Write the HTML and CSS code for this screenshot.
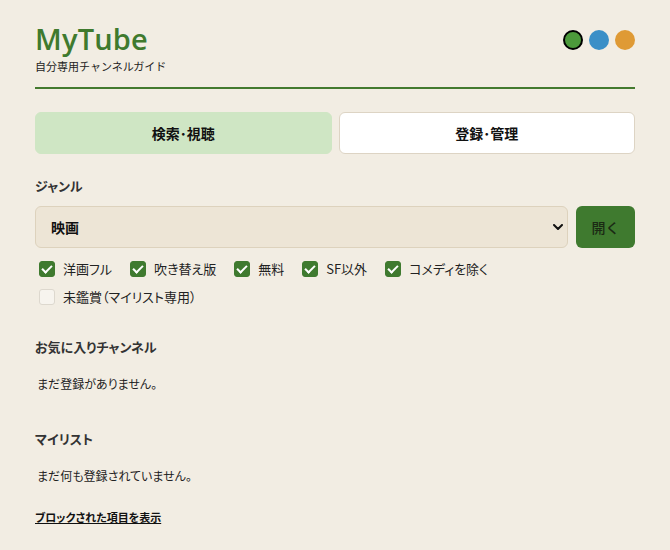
FILE: index.html
```html
<!DOCTYPE html>
<html lang="ja">
<head>
<meta charset="utf-8">
<title>MyTube</title>
<link rel="stylesheet" href="styles.css">
</head>
<body>
<div class="app">
  <header class="header">
    <div class="brand">
      <h1 class="title">MyTube</h1>
      <div class="subtitle">自分専用チャンネルガイド</div>
    </div>
    <div class="themes">
      <span class="dot dot-green is-active"></span>
      <span class="dot dot-blue"></span>
      <span class="dot dot-orange"></span>
    </div>
  </header>

  <nav class="tabs">
    <button class="tab is-active">検索･視聴</button>
    <button class="tab">登録･管理</button>
  </nav>

  <section class="genre">
    <div class="label">ジャンル</div>
    <div class="genre-row">
      <div class="select-wrap">
        <select class="select"><option>映画</option></select>
        <svg class="chev" viewBox="0 0 10 6" width="10" height="6"><path d="M1 1 L5 5 L9 1" fill="none" stroke="#111" stroke-width="2" stroke-linecap="round" stroke-linejoin="round"/></svg>
      </div>
      <button class="open-btn">開く</button>
    </div>
    <div class="checks">
      <label class="check"><input type="checkbox" checked><span>洋画フル</span></label>
      <label class="check"><input type="checkbox" checked><span>吹き替え版</span></label>
      <label class="check"><input type="checkbox" checked><span>無料</span></label>
      <label class="check"><input type="checkbox" checked><span>SF以外</span></label>
      <label class="check"><input type="checkbox" checked><span>コメディを除く</span></label>
    </div>
    <div class="checks">
      <label class="check"><input type="checkbox" disabled><span>未鑑賞（マイリスト専用）</span></label>
    </div>
  </section>

  <section class="block block-first">
    <h2 class="heading">お気に入りチャンネル</h2>
    <p class="empty">まだ登録がありません。</p>
  </section>

  <section class="block">
    <h2 class="heading">マイリスト</h2>
    <p class="empty">まだ何も登録されていません。</p>
  </section>

  <a class="blocked-link" href="#">ブロックされた項目を表示</a>
</div>
</body>
</html>
```

FILE: styles.css
```css
* { box-sizing: border-box; }
html, body { margin: 0; padding: 0; }
body {
  background: #f2ede3;
  color: #222;
  font-family: "Noto Sans CJK JP", "Noto Sans", sans-serif;
  font-feature-settings: "palt";
}
.app {
  width: 600px;
  margin-left: 35px;
  padding-top: 20px;
}
.header {
  display: flex;
  justify-content: space-between;
  align-items: flex-start;
  border-bottom: 2px solid #447a2f;
  padding-bottom: 13px;
}
.title {
  margin: 0;
  font-family: "Open Sans", "Noto Sans", sans-serif;
  font-size: 29px;
  font-weight: 600;
  color: #3f7a2e;
  line-height: 38px;
  letter-spacing: 0.2px;
}
.subtitle {
  font-size: 11px;
  line-height: 16px;
  color: #222;
  font-feature-settings: normal;
}
.themes {
  display: flex;
  gap: 6px;
  margin-top: 10px;
}
.dot {
  width: 20px;
  height: 20px;
  border-radius: 50%;
  display: block;
}
.dot-green { background: #4c9a3b; }
.dot-blue { background: #3a8fc7; }
.dot-orange { background: #df9a35; }
.dot.is-active { border: 2px solid #000; }

.tabs {
  display: grid;
  grid-template-columns: 1fr 1fr;
  gap: 7px;
  margin-top: 23px;
}
.tab {
  height: 42px;
  border-radius: 6px;
  border: 1px solid #ddd4c4;
  background: #fff;
  font-family: inherit;
  font-size: 14px;
  font-weight: 700;
  color: #111;
}
.tab.is-active {
  background: #cfe6c4;
  border-color: #cfe6c4;
}

.genre { margin-top: 23px; }
.label {
  font-size: 13px;
  font-weight: 700;
  line-height: 18px;
  color: #333;
}
.genre-row {
  display: flex;
  gap: 8px;
  margin-top: 11px;
}
.select-wrap {
  position: relative;
  flex: 1;
}
.select {
  width: 100%;
  height: 42px;
  appearance: none;
  -webkit-appearance: none;
  background: #ede5d6;
  border: 1px solid #ddd2bd;
  border-radius: 6px;
  padding: 0 15px;
  font-family: inherit;
  font-feature-settings: "palt";
  font-size: 14px;
  font-weight: 700;
  color: #111;
}
.chev {
  position: absolute;
  right: 5px;
  top: 18px;
  pointer-events: none;
}
.open-btn {
  width: 59px;
  height: 42px;
  border: none;
  border-radius: 6px;
  background: #3f7a2f;
  color: #1b2a14;
  font-family: inherit;
  font-size: 14px;
  font-weight: 500;
}

.checks {
  display: flex;
  flex-wrap: wrap;
  column-gap: 14px;
  margin-top: 9px;
}
.checks + .checks { margin-top: 4px; }
.check {
  display: flex;
  align-items: center;
  gap: 8px;
  font-size: 13px;
  line-height: 24px;
  color: #222;
}
.check input {
  appearance: none;
  -webkit-appearance: none;
  width: 16px;
  height: 16px;
  margin: 0 0 0 4px;
  border-radius: 3px;
  background: #f7f4ee;
  border: 1px solid #ddd8ce;
  display: grid;
  place-items: center;
}
.check input:checked {
  background: #3f7a2f;
  border-color: #3f7a2f;
}
.check input:checked::after {
  content: "";
  width: 4px;
  height: 8px;
  border: solid #fff;
  border-width: 0 2px 2px 0;
  transform: translateY(-1px) rotate(45deg);
}

.block { margin-top: 37px; }
.block.block-first { margin-top: 29px; }
.heading {
  margin: 0;
  font-size: 13px;
  font-weight: 700;
  line-height: 18px;
  color: #333;
}
.empty {
  margin: 19px 0 0 2px;
  font-size: 12px;
  line-height: 18px;
  color: #222;
}
.blocked-link {
  display: inline-block;
  margin-top: 24px;
  font-size: 11px;
  font-weight: 700;
  color: #111;
  text-decoration: underline;
}
```
